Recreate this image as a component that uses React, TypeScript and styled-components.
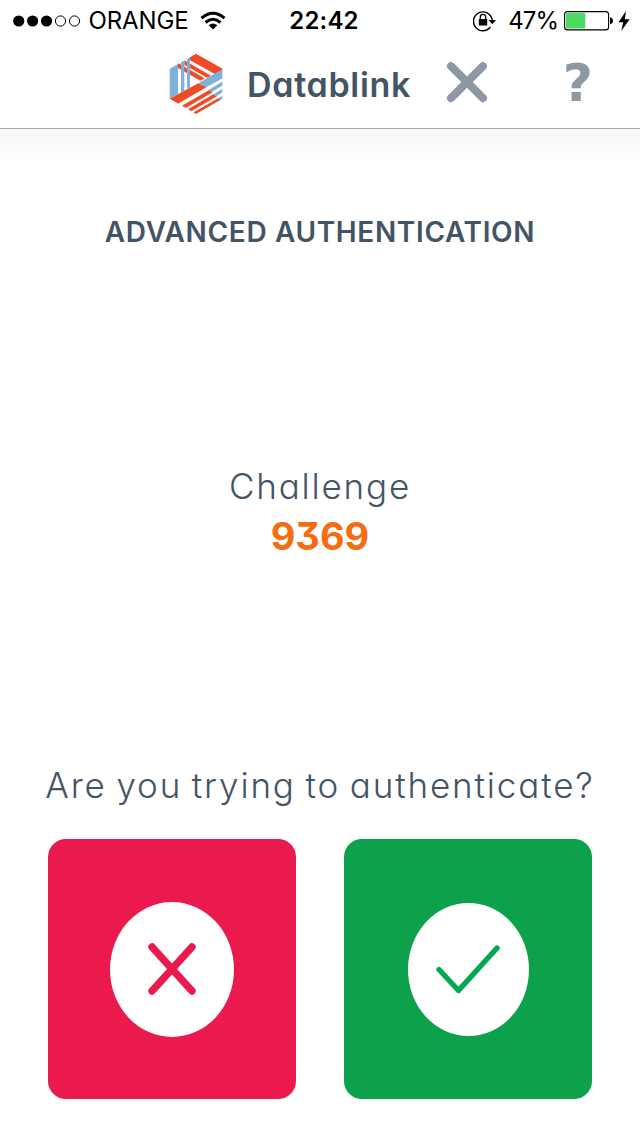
import React from "react";
import styled, { createGlobalStyle } from "styled-components";

const slate = "#435466";

const GlobalStyle = createGlobalStyle`
  * { box-sizing: border-box; }
  body { margin: 0; background: #fff; }
`;

const Screen = styled.div`
  width: 640px;
  height: 1136px;
  display: flex;
  flex-direction: column;
  overflow: hidden;
  background: #fff;
  color: ${slate};
  font-family: Inter, "Open Sans", sans-serif;
  font-feature-settings: "cv11", "cv09";
`;

const StatusBar = styled.div`
  height: 41px;
  display: grid;
  grid-template-columns: 1fr auto 1fr;
  align-items: center;
  padding: 0 10px 0 13px;
  color: #000;
  font-size: 24px;
  line-height: 41px;
  svg { display: block; flex: none; }
`;

const StatusGroup = styled.div<{ $end?: boolean }>`
  display: flex;
  align-items: center;
  justify-content: ${(p) => (p.$end ? "flex-end" : "flex-start")};
`;

const Carrier = styled.span`
  margin: 0 11px 0 7.5px;
  letter-spacing: -0.1px;
`;

const Clock = styled.span`
  padding-left: 5px;
  font-weight: 600;
  letter-spacing: 0.2px;
`;

const Percent = styled.span`
  margin: 0 6px 0 12px;
  letter-spacing: -1px;
`;

const Charge = styled.div`
  display: flex;
  align-items: center;
  gap: 5px;
`;

const Header = styled.header`
  height: 88px;
  display: flex;
  align-items: flex-start;
  padding: 11px 47px 0 168px;
  border-bottom: 1px solid #a9a9ab;
  svg { display: block; flex: none; }
`;

const Brand = styled.div`
  width: 199px;
  padding-left: 23px;
  font-size: 34px;
  font-weight: 600;
  line-height: 66px;
  letter-spacing: 0.7px;
  white-space: nowrap;
`;

const IconButton = styled.button`
  border: 0;
  padding: 0;
  background: none;
  color: #8d98a4;
  display: flex;
`;

const HelpButton = styled(IconButton)`
  margin-left: auto;
  font: bold 52px/62px "DejaVu Sans", sans-serif;
`;

const Main = styled.main`
  flex: 1;
  display: flex;
  flex-direction: column;
  align-items: center;
  background: linear-gradient(#f7f7f7, #fff 32px);
`;

const Title = styled.h1`
  margin: 83px 0 0;
  font-size: 28px;
  font-weight: 600;
  line-height: 40px;
  letter-spacing: 0.65px;
  white-space: nowrap;
`;

const Prompt = styled.div<{ $top: number; $spacing: number }>`
  margin-top: ${(p) => p.$top}px;
  font-size: 35px;
  font-weight: 300;
  line-height: 50px;
  letter-spacing: ${(p) => p.$spacing}px;
  word-spacing: -2px;
  white-space: nowrap;
`;

const Code = styled.div`
  font-size: 38px;
  font-weight: 700;
  line-height: 50px;
  letter-spacing: 0;
  color: #f56d12;
`;

const Actions = styled.div`
  display: flex;
  gap: 48px;
  margin-top: 29px;
`;

const ActionButton = styled.button<{ $color: string }>`
  width: 248px;
  height: 260px;
  padding: 0;
  border: 0;
  border-radius: 18px;
  background: ${(p) => p.$color};
  display: flex;
  align-items: center;
  justify-content: center;
`;

const Disc = styled.span<{ $w: number; $h: number }>`
  width: ${(p) => p.$w}px;
  height: ${(p) => p.$h}px;
  border-radius: 50%;
  background: #fff;
  display: flex;
  align-items: center;
  justify-content: center;
`;

const Logo = () => (
  <svg width="56" height="62" viewBox="24 18 168 186">
    <clipPath id="hex"><path d="M28 68L108 23L188 68V158L108 204L28 158Z" /></clipPath>
    <g clipPath="url(#hex)">
      <g fill="#ef4c26">
        <path d="M90 33L108 22L188 67V74L166 85L90 43Z" />
        <path d="M73 43L153 89L141 95L73 56Z" />
        <path d="M54 51L134 97L121 104L54 66Z" />
        <path d="M28 158L115 112L140 123L54 173Z" />
        <path d="M66 179L147 132L158 139L77 186Z" />
        <path d="M84 190L160 145L171 151L94 196Z" />
        <path d="M101 199L174 157L185 163L108 207Z" />
      </g>
      <g fill="#7fb0da">
        <path d="M28 68L54 53V144L28 158Z" />
        <path d="M63 48L73 43V134L63 139Z" />
        <path d="M81 38L90 33V125L81 130Z" />
        <path d="M188 69V97L140 123L115 112Z" />
        <path d="M188 106V118L156 138L146 132Z" />
        <path d="M188 128V139L170 150L160 145Z" />
        <path d="M188 149V158L182 162L174 157Z" />
      </g>
    </g>
  </svg>
);

const Signal = () => (
  <svg width="68" height="12" viewBox="0 0 68 12">
    {[5.7, 19.6, 33.5].map((x) => <circle key={x} cx={x} cy="6" r="5.6" />)}
    {[47.5, 61.5].map((x) => (
      <circle key={x} cx={x} cy="6" r="5.1" fill="none" stroke="#000" strokeWidth="1" />
    ))}
  </svg>
);

const Wifi = () => (
  <svg width="26" height="20" viewBox="0 0 26 20" fill="none" stroke="#000" strokeWidth="3">
    <path d="M1.5 7.2Q13 -2.8 24.5 7.2M5.5 11.5Q13 5 20.5 11.5" />
    <path d="M8.7 14.2Q13 10.7 17.3 14.2L13 18.5Z" fill="#000" stroke="none" />
  </svg>
);

const RotationLock = () => (
  <svg width="23" height="22" viewBox="0 0 23 22">
    <path d="M17.4 17A9.4 9.4 0 1 1 19.2 10" fill="none" stroke="#000" strokeWidth="1.4" />
    <path d="M15.6 10H23L19.3 14.2Z" />
    <rect x="5.8" y="9" width="8.4" height="6.6" rx="0.6" />
    <path d="M7.3 9.5V7A2.7 2.7 0 0 1 12.7 7V9.5" fill="none" stroke="#000" strokeWidth="1.3" />
  </svg>
);

const Battery = () => (
  <svg width="49" height="20" viewBox="0 0 49 20">
    <rect x="0.6" y="0.6" width="44" height="18.3" rx="3" fill="none" stroke="#000" strokeWidth="1.1" />
    <rect x="2" y="2" width="19.3" height="15.5" rx="1" fill="#4cd964" />
    <path d="M46 6.3Q49 7 49 9.8T46 13.2Z" />
  </svg>
);

const Bolt = () => (
  <svg width="12" height="20" viewBox="0 0 12 20">
    <path d="M8 0L0.5 11.2H5.2L3.2 20L11.7 8.2H6.8Z" />
  </svg>
);

export default function App() {
  return (
    <Screen>
      <GlobalStyle />
      <StatusBar>
        <StatusGroup>
          <Signal />
          <Carrier>ORANGE</Carrier>
          <Wifi />
        </StatusGroup>
        <Clock>22:42</Clock>
        <StatusGroup $end>
          <RotationLock />
          <Percent>47%</Percent>
          <Charge>
            <Battery />
            <Bolt />
          </Charge>
        </StatusGroup>
      </StatusBar>
      <Header>
        <Logo />
        <Brand>Datablink</Brand>
        <IconButton aria-label="Close">
          <svg width="88" height="60" viewBox="0 0 88 60">
            <path d="M28 14.2L60 46.2M60 14.2L28 46.2" stroke="currentColor" strokeWidth="8" strokeLinecap="round" />
          </svg>
        </IconButton>
        <HelpButton>?</HelpButton>
      </Header>
      <Main>
        <Title>ADVANCED AUTHENTICATION</Title>
        <Prompt $top={209} $spacing={1.8}>Challenge</Prompt>
        <Code>9369</Code>
        <Prompt $top={199} $spacing={1.85}>Are you trying to authenticate?</Prompt>
        <Actions>
          <ActionButton $color="#ea1a4e" aria-label="Deny">
            <Disc $w={124} $h={135}>
              <svg width="48" height="52" viewBox="0 0 48 52">
                <path d="M4 4L44 48M44 4L4 48" stroke="#ea1a4e" strokeWidth="7.4" strokeLinecap="round" />
              </svg>
            </Disc>
          </ActionButton>
          <ActionButton $color="#0da14b" aria-label="Approve">
            <Disc $w={121} $h={133}>
              <svg width="64" height="50" viewBox="0 0 64 50" fill="none">
                <path d="M3 25.5L22.5 46.5L61 4" stroke="#04a850" strokeWidth="5.4" strokeLinecap="round" strokeLinejoin="round" />
              </svg>
            </Disc>
          </ActionButton>
        </Actions>
      </Main>
    </Screen>
  );
}
